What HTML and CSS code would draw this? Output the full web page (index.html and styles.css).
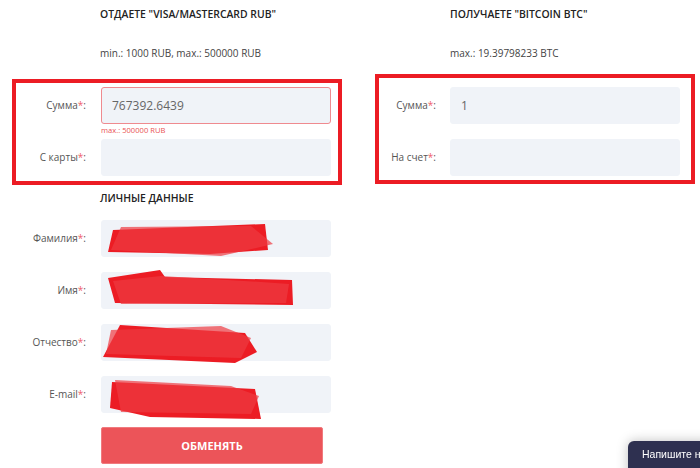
FILE: index.html
```html
<!DOCTYPE html>
<html lang="ru">
<head>
  <meta charset="UTF-8">
  <title>Обмен Visa/MasterCard RUB на Bitcoin BTC</title>
  <link rel="stylesheet" href="styles.css">
</head>
<body>

  <div class="exchange">

    <div class="col">
      <div class="col-title">Отдаете "Visa/MasterCard RUB"</div>
      <div class="col-limit">min.: 1000 RUB, max.: 500000 RUB</div>

      <div class="mark mark-give">
        <div class="row row-err">
          <label class="label">Сумма<span class="req">*</span>:</label>
          <div class="field">
            <input class="input input-error" type="text" value="767392.6439">
            <div class="err">max.: 500000 RUB</div>
          </div>
        </div>
        <div class="row">
          <label class="label">С карты<span class="req">*</span>:</label>
          <div class="field">
            <input class="input" type="text">
          </div>
        </div>
      </div>

      <div class="section-title">Личные данные</div>

      <div class="row">
        <label class="label">Фамилия<span class="req">*</span>:</label>
        <div class="field">
          <input class="input" type="text">
          <svg class="redact" width="230" height="37" viewBox="0 0 230 37">
            <polygon points="12,10 164,4 167,30 109,34 7,32" fill="#ec1c24"/>
            <polygon points="20,7 150,6 172,24 120,36 10,30" fill="#ee3a41" opacity="0.7"/>
          </svg>
        </div>
      </div>

      <div class="row">
        <label class="label">Имя<span class="req">*</span>:</label>
        <div class="field">
          <input class="input" type="text">
          <svg class="redact" width="230" height="37" viewBox="0 0 230 37">
            <polygon points="7,6 59,-2 64,5 191,8 192,33 14,31" fill="#ec1c24"/>
            <polygon points="12,9 60,4 160,10 188,12 185,31 20,32" fill="#ee3a41" opacity="0.7"/>
          </svg>
        </div>
      </div>

      <div class="row">
        <label class="label">Отчество<span class="req">*</span>:</label>
        <div class="field">
          <input class="input" type="text">
          <svg class="redact" width="230" height="37" viewBox="0 0 230 37">
            <polygon points="19,1 144,9 156,28 134,39 2,33" fill="#ec1c24"/>
            <polygon points="10,6 120,2 150,14 140,34 5,30" fill="#ee3a41" opacity="0.7"/>
          </svg>
        </div>
      </div>

      <div class="row">
        <label class="label">E-mail<span class="req">*</span>:</label>
        <div class="field">
          <input class="input" type="text">
          <svg class="redact" width="230" height="37" viewBox="0 0 230 37">
            <polygon points="11,6 154,13 160,43 49,41 9,32" fill="#ec1c24"/>
            <polygon points="14,4 130,10 158,20 150,38 20,36" fill="#ee3a41" opacity="0.7"/>
          </svg>
        </div>
      </div>

      <button class="btn" type="button">Обменять</button>
    </div>

    <div class="col">
      <div class="col-title">Получаете "Bitcoin BTC"</div>
      <div class="col-limit">max.: 19.39798233 BTC</div>

      <div class="mark mark-get">
        <div class="row">
          <label class="label">Сумма<span class="req">*</span>:</label>
          <div class="field">
            <input class="input" type="text" value="1">
          </div>
        </div>
        <div class="row">
          <label class="label">На счет<span class="req">*</span>:</label>
          <div class="field">
            <input class="input" type="text">
          </div>
        </div>
      </div>
    </div>

  </div>

  <div class="chat">Напишите нам</div>

</body>
</html>
```

FILE: styles.css
```css
:root {
  --text: #333;
  --label: #555;
  --muted: #666;
  --field: #f0f3f8;
  --accent: #ea5455;
  --mark: #ec1c24;
  --chat: #2e3050;
}

body {
  margin: 0;
  font-family: 'Open Sans', 'Liberation Sans', sans-serif;
  color: var(--text);
  background: #fff;
  overflow: hidden;
}

.exchange {
  display: grid;
  grid-template-columns: 350px 350px;
}

.col-title {
  margin-top: 6px;
  padding-left: 100px;
  font-size: 10.4px;
  line-height: 16px;
  font-weight: 600;
  text-transform: uppercase;
  color: #222;
}

.col-limit {
  margin-top: 23px;
  padding-left: 100px;
  font-size: 10px;
  line-height: 16px;
  color: #444;
}

.mark {
  box-sizing: border-box;
  border: 4px solid var(--mark);
}

.mark-give {
  margin: 18px 0 0 12px;
  width: 330px;
  padding: 4px 7px 5px 0;
}

.mark-give .label {
  width: 70px;
}

.mark-get {
  margin: 13px 0 0 25px;
  width: 320px;
  padding: 9px 11px 4px 0;
}

.mark-get .label {
  width: 57px;
  margin-right: 14px;
}

.mark .row + .row {
  margin-top: 15px;
}

.mark .row-err + .row {
  margin-top: 0;
}

.row {
  display: flex;
  align-items: flex-start;
}

.label {
  width: 86px;
  margin-right: 15px;
  flex-shrink: 0;
  text-align: right;
  font-size: 10px;
  line-height: 37px;
  color: var(--label);
  white-space: nowrap;
}

.req {
  color: #f0606a;
}

.field {
  position: relative;
  width: 230px;
}

.input {
  display: block;
  box-sizing: border-box;
  width: 230px;
  height: 37px;
  margin: 0;
  padding: 0 10px;
  border: 1px solid var(--field);
  border-radius: 3px;
  background: var(--field);
  font-family: inherit;
  font-size: 12px;
  color: var(--muted);
  outline: none;
}

.input-error {
  border-color: #ef8a8f;
}

.err {
  height: 12px;
  margin-bottom: 3px;
  font-size: 7.6px;
  line-height: 12px;
  color: var(--accent);
}

.redact {
  position: absolute;
  left: 0;
  top: 0;
  overflow: visible;
  pointer-events: none;
}

.section-title {
  margin: 5px 0 14px;
  padding-left: 100px;
  font-size: 10.4px;
  line-height: 16px;
  font-weight: 600;
  text-transform: uppercase;
  color: #222;
}

.col > .row + .row {
  margin-top: 15px;
}

.btn {
  display: block;
  width: 222px;
  height: 37px;
  margin: 14px 0 0 101px;
  border: 1px solid #f07a7e;
  border-radius: 2px;
  background: #ec5459;
  color: #fff;
  font-family: inherit;
  font-size: 11px;
  font-weight: 700;
  text-transform: uppercase;
  cursor: pointer;
}

.chat {
  position: fixed;
  left: 628px;
  top: 441px;
  width: 140px;
  height: 40px;
  padding: 5px 0 0 14px;
  box-sizing: border-box;
  border-radius: 6px 0 0 0;
  background: var(--chat);
  color: #fff;
  font-family: 'Liberation Sans', Arial, sans-serif;
  font-size: 10.5px;
  line-height: 16px;
  white-space: nowrap;
  box-shadow: 0 0 12px rgba(0, 0, 0, 0.25);
}
```
